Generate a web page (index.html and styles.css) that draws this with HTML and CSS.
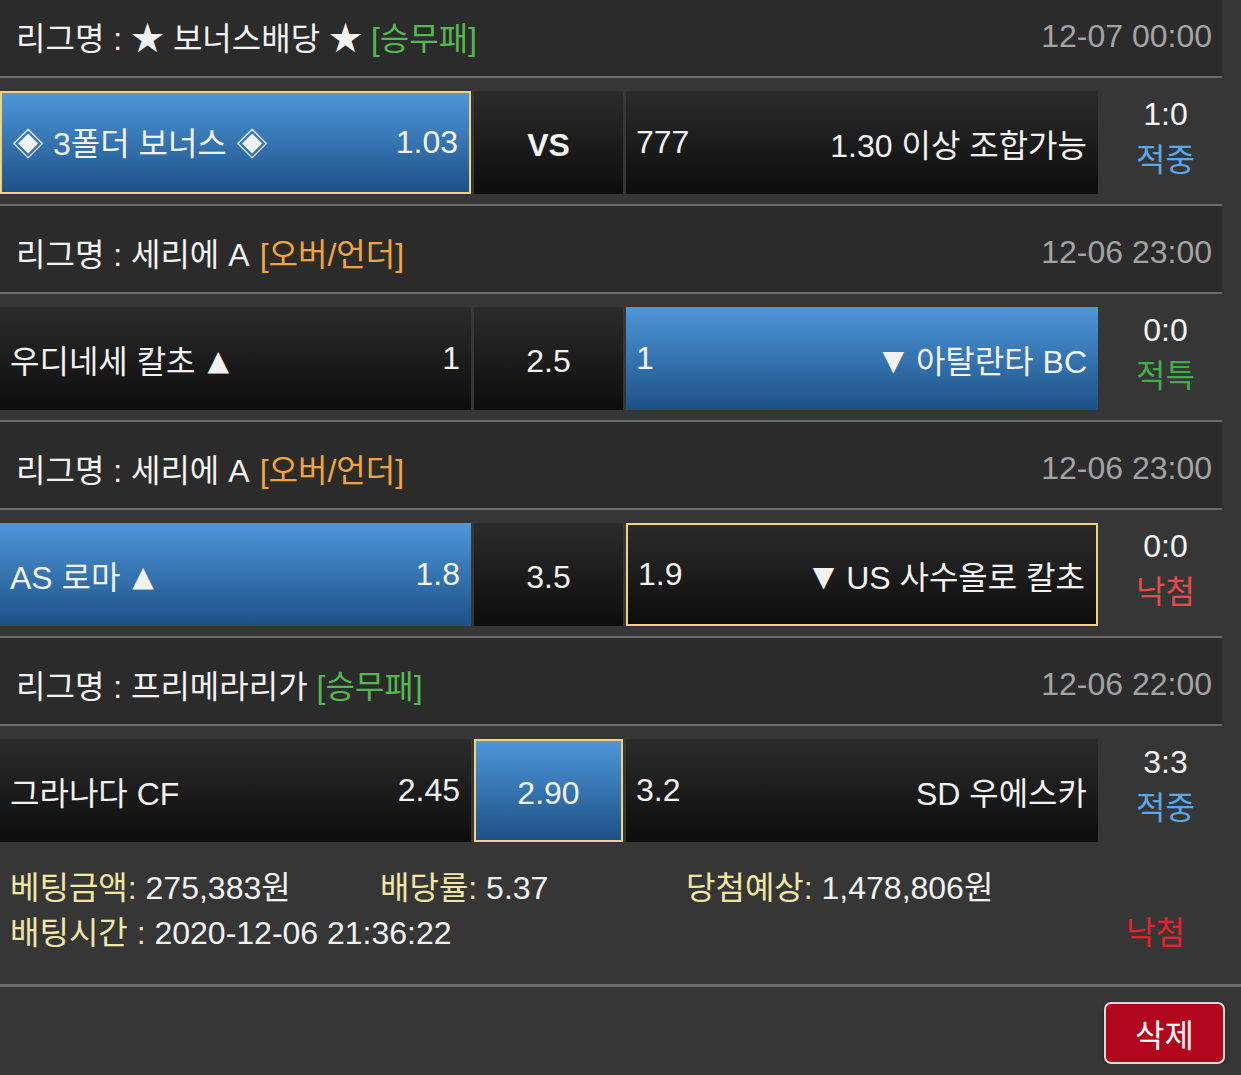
FILE: index.html
```html
<!DOCTYPE html>
<html lang="ko">
  <head>
    <meta charset="UTF-8" />
    <title>배팅내역</title>
    <link rel="stylesheet" href="styles.css">
  </head>

  <body>
    <div class="bet-slip">
      <div class="game">
        <div class="league">
          <span class="league-name">리그명 : <span class="star">★</span> 보너스배당 <span class="star">★</span> <span class="type win-draw">[승무패]</span></span>
          <span class="time">12-07 00:00</span>
        </div>
        <div class="odds-row">
          <div class="odd blue picked">
            <span>◈ 3폴더 보너스 ◈</span>
            <span>1.03</span>
          </div>
          <div class="odd mid"><b>VS</b></div>
          <div class="odd">
            <span>777</span>
            <span>1.30 이상 조합가능</span>
          </div>
          <div class="result">
            <span>1:0</span>
            <span class="status hit">적중</span>
          </div>
        </div>
      </div>

      <div class="game">
        <div class="league">
          <span class="league-name">리그명 : 세리에 A <span class="type over-under">[오버/언더]</span></span>
          <span class="time">12-06 23:00</span>
        </div>
        <div class="odds-row">
          <div class="odd">
            <span>우디네세 칼초 <span class="arrow">▲</span></span>
            <span>1</span>
          </div>
          <div class="odd mid">2.5</div>
          <div class="odd blue">
            <span>1</span>
            <span><span class="arrow">▼</span> 아탈란타 BC</span>
          </div>
          <div class="result">
            <span>0:0</span>
            <span class="status special">적특</span>
          </div>
        </div>
      </div>

      <div class="game">
        <div class="league">
          <span class="league-name">리그명 : 세리에 A <span class="type over-under">[오버/언더]</span></span>
          <span class="time">12-06 23:00</span>
        </div>
        <div class="odds-row">
          <div class="odd blue">
            <span>AS 로마 <span class="arrow">▲</span></span>
            <span>1.8</span>
          </div>
          <div class="odd mid">3.5</div>
          <div class="odd picked">
            <span>1.9</span>
            <span><span class="arrow">▼</span> US 사수올로 칼초</span>
          </div>
          <div class="result">
            <span>0:0</span>
            <span class="status miss">낙첨</span>
          </div>
        </div>
      </div>

      <div class="game last">
        <div class="league">
          <span class="league-name">리그명 : 프리메라리가 <span class="type win-draw">[승무패]</span></span>
          <span class="time">12-06 22:00</span>
        </div>
        <div class="odds-row">
          <div class="odd">
            <span>그라나다 CF</span>
            <span>2.45</span>
          </div>
          <div class="odd mid blue picked">2.90</div>
          <div class="odd">
            <span>3.2</span>
            <span>SD 우에스카</span>
          </div>
          <div class="result">
            <span>3:3</span>
            <span class="status hit">적중</span>
          </div>
        </div>
      </div>
    </div>

    <div class="summary">
      <div><span class="label">베팅금액:</span> 275,383원</div>
      <div><span class="label">배당률:</span> 5.37</div>
      <div><span class="label">당첨예상:</span> 1,478,806원</div>
      <div class="bet-time"><span class="label">배팅시간 :</span> 2020-12-06 21:36:22</div>
      <div class="total-result">낙첨</div>
    </div>

    <div class="actions">
      <button class="delete">삭제</button>
    </div>
  </body>
</html>
```

FILE: styles.css
```css
body {
  margin: 0;
  font-family: "Liberation Sans", "Noto Sans CJK KR", sans-serif;
  font-size: 32px;
  color: #f2f2f2;
  background-color: #363636;
  overflow: hidden;
}

.bet-slip {
  width: 1222px;
  margin-top: -10px;
}

.league {
  display: flex;
  justify-content: space-between;
  align-items: center;
  height: 88px;
  padding: 6px 10px 0 16px;
  box-sizing: border-box;
  background-color: #2b2b2b;
  border-bottom: 2px solid #6c6c6c;
}

.star {
  font-family: "Noto Sans CJK KR", sans-serif;
  font-size: 33px;
}

.win-draw {
  color: #53b94f;
}

.over-under {
  color: #f2a43a;
  margin-left: 3px;
}

.time {
  color: #a3a3a3;
}

.odds-row {
  display: grid;
  grid-template-columns: 471px 149px 472px 1fr;
  gap: 3px;
  padding: 13px 0 10px;
  border-bottom: 2px solid #6c6c6c;
}

.game.last .odds-row {
  border-bottom: none;
}

.odd {
  display: flex;
  justify-content: space-between;
  align-items: center;
  height: 103px;
  padding: 0 11px 0 10px;
  box-sizing: border-box;
  background: linear-gradient(#2b2b2b, #0d0d0d);
  white-space: nowrap;
}

.odd.mid {
  justify-content: center;
  padding: 6px 0 0;
}

.odd.blue {
  background: linear-gradient(#4d97d9, #1d5187);
}

.odd.picked {
  border: 2px solid #f3d27d;
}

.arrow {
  font-family: "DejaVu Sans", sans-serif;
  font-size: 28px;
  vertical-align: 3px;
  margin: 0 3px;
}

.result {
  display: flex;
  flex-direction: column;
  align-items: center;
  justify-content: center;
  height: 103px;
  padding: 0 0 12px 8px;
  box-sizing: border-box;
  line-height: 46px;
}

.status.hit {
  color: #5aa9e6;
}

.status.special {
  color: #3fae49;
}

.status.miss {
  color: #e54b4b;
}

.summary {
  display: grid;
  grid-template-columns: 370px 306px 1fr auto;
  line-height: 45px;
  padding: 14px 56px 28px 10px;
  border-bottom: 3px solid #6c6c6c;
}

.label {
  color: #f0e7a5;
}

.bet-time {
  grid-column: 1 / 4;
}

.total-result {
  grid-column: 4;
  color: #e5232a;
}

.actions {
  display: flex;
  justify-content: flex-end;
  padding: 15px 16px 0 0;
}

.delete {
  width: 121px;
  height: 62px;
  font-family: inherit;
  font-size: 32px;
  color: white;
  background-color: #b1061c;
  border: 2px solid #d9d9d9;
  border-radius: 7px;
  box-shadow: 0 2px 4px rgba(0, 0, 0, 0.4);
}
```
